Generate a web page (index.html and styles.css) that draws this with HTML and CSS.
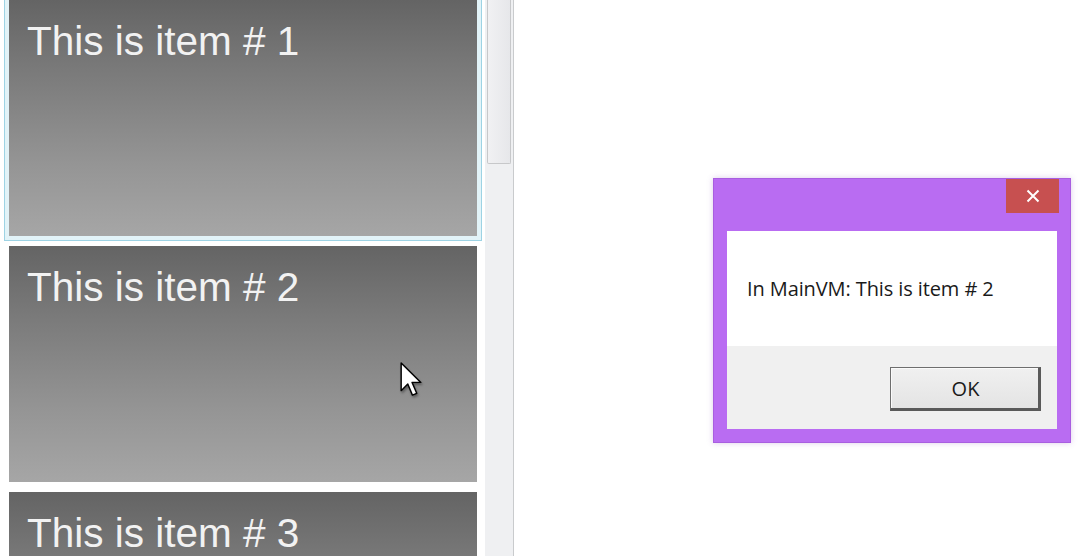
FILE: index.html
```html
<!DOCTYPE html>
<html lang="en">
<head>
<meta charset="utf-8">
<title>Items</title>
<link rel="stylesheet" href="styles.css">
</head>
<body>
<div class="screen">
  <div class="listpane">
    <div class="items">
      <div class="item selected"><div class="card"><span class="label">This is item # 1</span></div></div>
      <div class="item"><div class="card"><span class="label">This is item # 2</span></div></div>
      <div class="item"><div class="card"><span class="label">This is item # 3</span></div></div>
    </div>
    <div class="scrollbar"><div class="thumb"></div></div>
  </div>
  <div class="desktop"></div>

  <div class="dialog">
    <div class="titlebar">
      <div class="close">
        <svg width="16" height="16" viewBox="0 0 16 16"><path d="M2.5 2.5 L13.5 13.5 M13.5 2.5 L2.5 13.5" stroke="#fff" stroke-width="2" fill="none"/></svg>
      </div>
    </div>
    <div class="client">
      <div class="message">In MainVM: This is item # 2</div>
      <div class="footer">
        <div class="okbtn">OK</div>
      </div>
    </div>
  </div>

  <svg class="cursor" width="22" height="34" viewBox="0 0 12 19">
    <path d="M0.5 0.5 L0.5 16 L4.2 12.3 L6.8 18.5 L9.2 17.5 L6.6 11.4 L11.5 11.4 Z" fill="#fff" stroke="#000" stroke-width="0.8" stroke-linejoin="round"/>
  </svg>
</div>
</body>
</html>
```

FILE: styles.css
```css
html, body {
  margin: 0;
  padding: 0;
  background: #ffffff;
}

.screen {
  position: relative;
  width: 1082px;
  height: 556px;
  overflow: hidden;
  display: flex;
  font-family: "Liberation Sans", Arial, sans-serif;
}

.listpane {
  width: 514px;
  height: 556px;
  display: flex;
  flex: none;
  overflow: hidden;
  box-sizing: border-box;
  border-right: 1px solid #c9cbcd;
}

.items {
  width: 482px;
  padding-left: 4px;
  margin-top: -5px;
  box-sizing: border-box;
  display: flex;
  flex-direction: column;
}

.item {
  width: 478px;
  box-sizing: border-box;
  border: 1px solid transparent;
  padding: 4px;
  flex: none;
}

.item.selected {
  border-color: #9dd3e4;
  background: #e2f3f8;
}

.card {
  height: 236px;
  background: linear-gradient(#646464 0%, #7a7a7a 30%, #959595 70%, #a6a6a6 100%);
  padding: 18px 0 0 18px;
  box-sizing: border-box;
}

.label {
  font-size: 40.5px;
  line-height: 46px;
  color: #f2f2f2;
}

.scrollbar {
  margin-left: 3px;
  width: 28px;
  background: #eff0f2;
  padding: 0 2px;
  box-sizing: border-box;
}

.thumb {
  height: 164px;
  background: linear-gradient(90deg, #f1f1f3, #e6e7ea);
  border: 1px solid #c7c8ca;
  border-top: none;
  border-radius: 0 0 2px 2px;
  box-sizing: border-box;
}

.desktop {
  flex: 1;
}

.dialog {
  position: absolute;
  left: 713px;
  top: 178px;
  width: 358px;
  height: 265px;
  box-sizing: border-box;
  background: #b96cf2;
  border: 1px solid #a85ee0;
  padding: 0 13px 13px 13px;
  display: flex;
  flex-direction: column;
  box-shadow: 0 0 6px rgba(120, 60, 170, 0.25);
}

.titlebar {
  height: 52px;
  display: flex;
  justify-content: flex-end;
  flex: none;
}

.close {
  width: 53px;
  height: 34px;
  margin-right: -2px;
  background: #c75050;
  display: flex;
  align-items: center;
  justify-content: center;
}

.client {
  flex: 1;
  display: flex;
  flex-direction: column;
  background: #ffffff;
}

.message {
  height: 115px;
  box-sizing: border-box;
  padding: 45px 0 0 20px;
  font-family: "Open Sans", "Noto Sans", sans-serif;
  font-size: 20px;
  line-height: 26px;
  letter-spacing: -0.1px;
  color: #1a1a1a;
}

.footer {
  flex: 1;
  background: #f0f0f0;
  display: flex;
  justify-content: flex-end;
  padding: 21px 16px 0 0;
}

.okbtn {
  width: 151px;
  height: 44px;
  box-sizing: border-box;
  border: 1px solid #6e6e6e;
  border-right-width: 3px;
  border-bottom-width: 3px;
  border-right-color: #5a5a5a;
  border-bottom-color: #5a5a5a;
  background: linear-gradient(#f0f0f0, #e4e4e4);
  box-shadow: inset 1px 1px 0 #fafafa;
  display: flex;
  align-items: center;
  justify-content: center;
  padding-left: 2px;
  font-family: "Open Sans", "Noto Sans", sans-serif;
  font-size: 20px;
  color: #1a1a1a;
}

.cursor {
  position: absolute;
  left: 400px;
  top: 362px;
  filter: drop-shadow(1px 2px 1px rgba(0, 0, 0, 0.35));
}
```
